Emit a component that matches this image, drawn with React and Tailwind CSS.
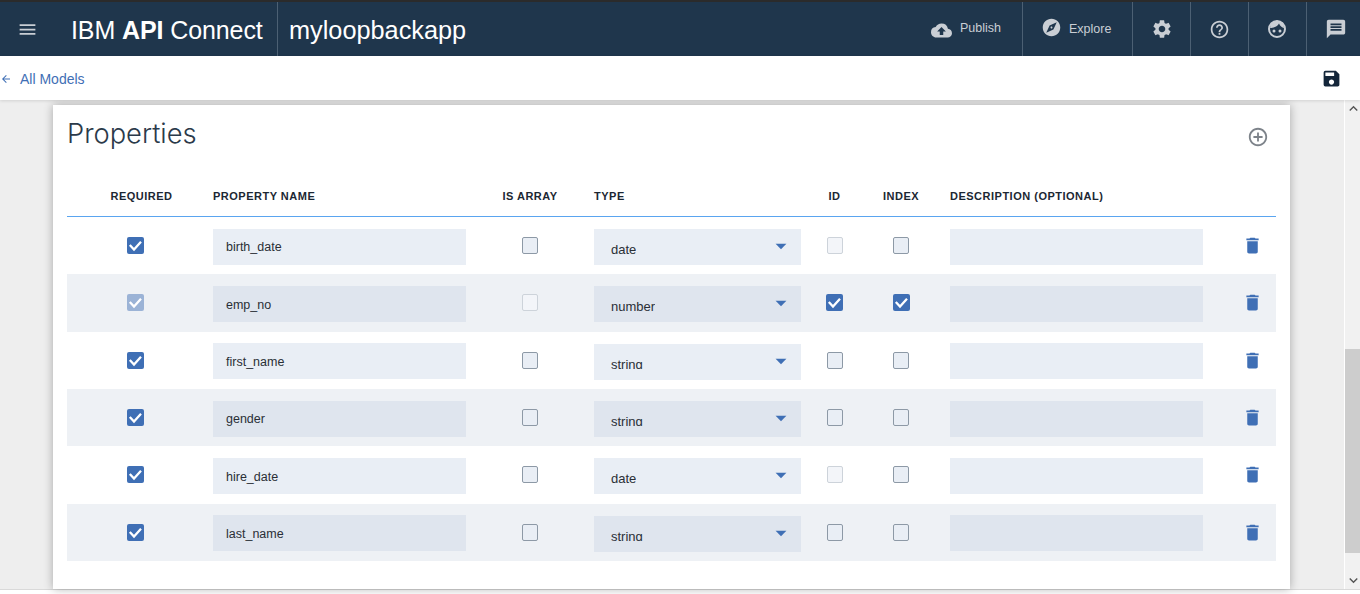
import React from 'react';
import {
    MdMenu, MdCloudUpload, MdExplore, MdSettings, MdHelpOutline, MdMessage,
    MdSave, MdAddCircleOutline, MdDelete, MdArrowDropDown,
    MdKeyboardArrowUp, MdKeyboardArrowDown, MdArrowBack,
} from 'react-icons/md';

const rows = [
    { name: 'birth_date', type: 'date', required: 'on', array: 'off', id: 'faint', index: 'off' },
    { name: 'emp_no', type: 'number', required: 'muted', array: 'faint', id: 'on', index: 'on' },
    { name: 'first_name', type: 'string', required: 'on', array: 'off', id: 'off', index: 'off' },
    { name: 'gender', type: 'string', required: 'on', array: 'off', id: 'off', index: 'off' },
    { name: 'hire_date', type: 'date', required: 'on', array: 'off', id: 'faint', index: 'off' },
    { name: 'last_name', type: 'string', required: 'on', array: 'off', id: 'off', index: 'off' },
];

const columns = 'grid grid-cols-[146px_253px_128px_207px_67px_66px_16px_253px_73px]';

const FaceIcon = () => (
    <svg width="18" height="18" viewBox="0 0 18 18">
        <circle cx="9" cy="9" r="8" fill="none" stroke="#c9ced4" strokeWidth="2" />
        <path d="M2 8C5 8 9 7 11 3.500C12 6 14 7.500 16 8L15 2.500L9 0.500L3 3Z" fill="#c9ced4" />
        <circle cx="6" cy="11" r="1.500" fill="#c9ced4" />
        <circle cx="12" cy="11" r="1.500" fill="#c9ced4" />
    </svg>
);

const Checkbox = ({ state }) => {
    if (state === 'on' || state === 'muted') {
        return (
            <div className={`w-[17px] h-[17px] rounded-[2px] ${state === 'on' ? 'bg-[#3f6fb5]' : 'bg-[#9bb3d6]'}`}>
                <svg width="17" height="17" viewBox="0 0 17 17">
                    <path d="M2.800 8L7 12.500L14 4.800" fill="none" stroke="white" strokeWidth="2.300" />
                </svg>
            </div>
        );
    }
    const look = state === 'faint'
        ? 'bg-[#f3f5f9] border-[#cdd3da]'
        : 'bg-[#e9eef5] border-[#8d99a6]';
    return <div className={`w-[16px] h-[17px] rounded-[2px] border ${look}`} />;
};

const HeaderAction = ({ icon, label, className }) => (
    <div className={`h-[54px] flex items-center border-l border-[#4c6073] text-[#c9ced4] text-[12.500px] ${className}`}>
        {icon}
        {label && <span>{label}</span>}
    </div>
);

const PropertyRow = ({ row, shaded }) => {
    const field = shaded ? 'bg-[#dfe5ee]' : 'bg-[#e9eef5]';
    return (
        <div className={`${columns} h-[57.330px] items-center text-[13px] text-[#2a2f36] ${shaded ? 'bg-[#eef1f5]' : ''}`}>
            <div className="pl-[60px]"><Checkbox state={row.required} /></div>
            <div className={`${field} h-[36px] mt-[2px] pl-[13px] pt-[2px] text-[12.500px] flex items-center`}>{row.name}</div>
            <div className="flex justify-center"><Checkbox state={row.array} /></div>
            <div className={`${field} h-[36px] mt-[3px] pl-[17px] pr-[7px] flex justify-between overflow-hidden`}>
                <span className="leading-[15px] pt-[13px] h-[25px] overflow-hidden">{row.type}</span>
                <MdArrowDropDown size={26} className="text-[#3f6fb5] mt-[4px]" />
            </div>
            <div className="flex justify-center"><Checkbox state={row.id} /></div>
            <div className="flex justify-center"><Checkbox state={row.index} /></div>
            <div />
            <div className={`${field} h-[36px] mt-[2px]`} />
            <div className="pl-[39px] text-[#3f6fb5]"><MdDelete size={21} /></div>
        </div>
    );
};

const App = () => {
    return (
        <div className="h-[594px] w-[1360px] flex flex-col overflow-hidden bg-white font-['Liberation_Sans',sans-serif]">
            <header className="h-[56px] shrink-0 bg-[#1f364c] border-t-2 border-[#2b2b2b] flex items-center text-white">
                <div className="w-[71px] pl-[17px]"><MdMenu size={21} className="text-[#c9ced4]" /></div>
                <div className="w-[206px] text-[25px] tracking-[-0.1px] pt-[3px]">IBM <b>API</b> Connect</div>
                <div className="h-[54px] flex items-center border-l border-[#4c6073] pl-[11px] pt-[3px] text-[25.300px] grow">myloopbackapp</div>
                <div className="flex items-center text-[#c9ced4] text-[12.500px] pr-[21px] gap-[8px]">
                    <MdCloudUpload size={21} className="mt-[2px]" />
                    <span className="-mt-[2px]">Publish</span>
                </div>
                <HeaderAction className="w-[110px] pl-[18px] gap-[7px]" icon={<MdExplore size={21} className="-mt-[4px]" />} label="Explore" />
                <HeaderAction className="w-[58px] pl-[18px]" icon={<MdSettings size={22} />} />
                <HeaderAction className="w-[58px] pl-[18px]" icon={<MdHelpOutline size={21} />} />
                <HeaderAction className="w-[58px] pl-[19px]" icon={<FaceIcon />} />
                <HeaderAction className="w-[54px] pl-[18px]" icon={<MdMessage size={22} />} />
            </header>

            <div className="h-[44px] shrink-0 flex items-center justify-between text-[14px] text-[#3f6fb5] pr-[18px] z-10 shadow-[0_1px_3px_rgba(0,0,0,0.12)] bg-white">
                <div className="flex items-center gap-[8px] mt-[2px]">
                    <MdArrowBack size={12} />
                    <span>All Models</span>
                </div>
                <MdSave size={21} className="text-[#14263a]" />
            </div>

            <div className="h-[490px] shrink-0 flex bg-[#eeeeee] border-b border-[#d9d9d9]">
                <main className="grow pl-[53px] pr-[54px] pt-[5px]">
                    <section className="h-[484px] bg-white shadow-[0_0_9px_rgba(0,0,0,0.3)] px-[14px]">
                        <div className="h-[75px] flex justify-between">
                            <h1 className="text-[27.300px] text-[#2b3a4a] font-light font-['Inter',sans-serif] mt-[9px] leading-[40px]">Properties</h1>
                            <MdAddCircleOutline size={22} className="text-[#7d838a] mr-[7px] mt-[21px]" />
                        </div>
                        <div className={`${columns} h-[37px] pt-[8px] items-start text-[11px] font-bold tracking-[0.5px] text-[#1c2733] border-b border-[#5aa5f0]`}>
                            <div className="text-center pl-[3px]">REQUIRED</div>
                            <div>PROPERTY NAME</div>
                            <div className="text-center">IS ARRAY</div>
                            <div>TYPE</div>
                            <div className="text-center">ID</div>
                            <div className="text-center">INDEX</div>
                            <div />
                            <div>DESCRIPTION (OPTIONAL)</div>
                            <div />
                        </div>
                        {rows.map((row, i) => (
                            <PropertyRow key={row.name} row={row} shaded={i % 2 === 1} />
                        ))}
                    </section>
                </main>
                <aside className="w-[16px] shrink-0 flex flex-col justify-between bg-[#f1f1f1] border-l border-white relative">
                    <MdKeyboardArrowUp size={17} className="text-[#555]" />
                    <div className="absolute left-0 right-0 top-[249px] h-[204px] bg-[#cdcdcd]" />
                    <MdKeyboardArrowDown size={17} className="text-[#555]" />
                </aside>
            </div>
        </div>
    );
};

export default App;
